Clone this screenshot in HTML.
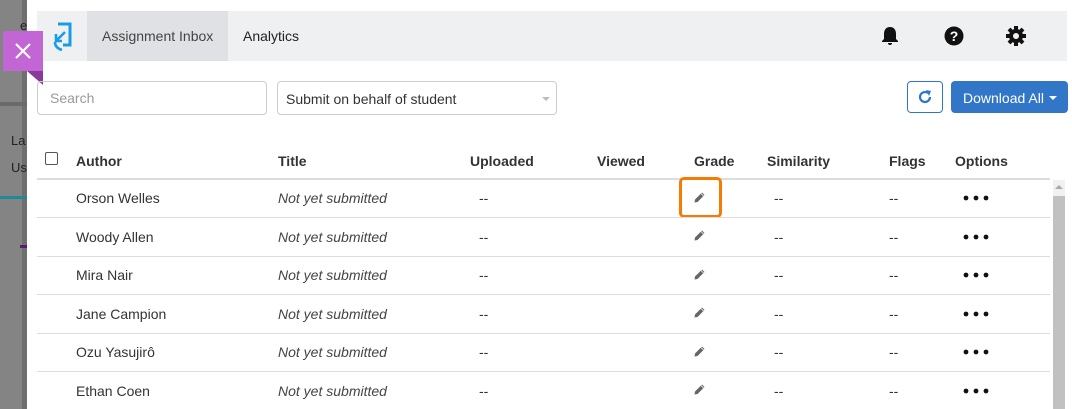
<!DOCTYPE html>
<html><head><style>
*{margin:0;padding:0;box-sizing:border-box}
body{width:1072px;height:409px;overflow:hidden;position:relative;font-family:"Liberation Sans",sans-serif;background:#808080}
.abs{position:absolute}
.modal{left:27px;top:0;width:1045px;height:409px;background:#fff}
.hdr{left:37px;top:11px;width:1030px;height:50px;background:#eef0f2}
.t{position:absolute;font-size:14px;color:#333;white-space:nowrap}
.th{font-weight:bold;color:#333}
.line{position:absolute;left:37px;width:1013px;height:1px;background:#ddd}
.it{font-style:italic;color:#444}
.dots{position:absolute;left:963px;width:26px;height:6px}
.pen{position:absolute;left:693px;width:13px;height:13px}
</style></head><body>
<div class="abs" style="left:0;top:0;width:22px;height:409px;background:#848484"></div>
<div class="abs" style="left:22px;top:0;width:5px;height:409px;background:#6f6f6f"></div>
<div class="abs" style="left:0;top:102px;width:27px;height:4px;background:#6a6a6a"></div>
<div class="abs" style="left:0;top:196px;width:27px;height:3px;background:#1f8a96"></div>
<div class="abs" style="left:20px;top:245px;width:7px;height:3px;background:#5a1c6e"></div>
<div class="t" style="left:11px;top:133px;color:#222;font-size:13px">La</div>
<div class="t" style="left:11px;top:160px;color:#222;font-size:13px">Us</div>
<div class="t" style="left:20px;top:18px;color:#222;font-size:13px">e</div>
<div class="abs modal"></div>
<div class="abs hdr"></div>
<div class="abs" style="left:87px;top:11px;width:141px;height:50px;background:#dfe1e4"></div>
<svg class="abs" style="left:50px;top:21px" width="24" height="30" viewBox="0 0 24 30"><path d="M8 3H20V24H13" fill="none" stroke="#1a9be6" stroke-width="3"/><path d="M15 11L7 19M6 13V20H12" fill="none" stroke="#1a9be6" stroke-width="2.6"/><path d="M5 21Q5 27 12 29" fill="none" stroke="#1a9be6" stroke-width="2.6"/></svg>
<div class="t" style="left:102px;top:28px;color:#444">Assignment Inbox</div>
<div class="t" style="left:243px;top:28px;color:#222">Analytics</div>
<svg class="abs" style="left:880px;top:26px" width="20" height="20" viewBox="0 0 20 20"><path d="M10 1C6 1 4 4 4 8V13L2 15V16H18V15L16 13V8C16 4 14 1 10 1Z M8 17H12A2 2 0 0 1 8 17Z" fill="#111"/></svg>
<svg class="abs" style="left:944px;top:26px" width="20" height="20" viewBox="0 0 20 20"><circle cx="10" cy="10" r="9.5" fill="#111"/><text x="10" y="15" font-size="14" font-weight="bold" text-anchor="middle" fill="#fff" font-family="Liberation Sans">?</text></svg>
<svg class="abs" style="left:1005px;top:25px" width="22" height="22" viewBox="0 0 22 22"><g fill="#111"><circle cx="11" cy="11" r="7"/><g stroke="#111" stroke-width="4"><line x1="11" y1="1" x2="11" y2="21"/><line x1="1" y1="11" x2="21" y2="11"/><line x1="4" y1="4" x2="18" y2="18"/><line x1="18" y1="4" x2="4" y2="18"/></g></g><circle cx="11" cy="11" r="3" fill="#eef0f2"/></svg>
<div class="abs" style="left:3px;top:31px;width:40px;height:40px;background:#c266d6"></div>
<div class="abs" style="left:27px;top:71px;width:0;height:0;border-top:14px solid #8a3a9a;border-left:16px solid transparent"></div>
<svg class="abs" style="left:14px;top:42px" width="18" height="18" viewBox="0 0 18 18"><path d="M2 2L16 16M16 2L2 16" stroke="#fff" stroke-width="2.2"/></svg>
<div class="abs" style="left:37px;top:81px;width:230px;height:34px;border:1px solid #ccc;border-radius:4px"></div>
<div class="t" style="left:50px;top:90px;color:#999">Search</div>
<div class="abs" style="left:277px;top:81px;width:280px;height:34px;border:1px solid #ccc;border-radius:4px"></div>
<div class="t" style="left:286px;top:91px">Submit on behalf of student</div>
<div class="abs" style="left:542px;top:97px;border-top:4px solid #bbb;border-left:4px solid transparent;border-right:4px solid transparent"></div>
<div class="abs" style="left:907px;top:81px;width:36px;height:32px;border:1px solid #2e77c8;border-radius:4px"></div>
<svg class="abs" style="left:917px;top:89px" width="16" height="16" viewBox="0 0 16 16"><path d="M13 8A5 5 0 1 1 11 4" fill="none" stroke="#2e77c8" stroke-width="2.2"/><path d="M9 1L14 2L12 7Z" fill="#2e77c8"/></svg>
<div class="abs" style="left:951px;top:81px;width:117px;height:32px;background:#3276c8;border-radius:4px"></div>
<div class="t" style="left:963px;top:90px;color:#fff">Download All</div>
<div class="abs" style="left:1049px;top:96px;border-top:4px solid #fff;border-left:4px solid transparent;border-right:4px solid transparent"></div>
<div class="abs" style="left:45px;top:152px;width:13px;height:13px;border:1px solid #555;border-radius:2px"></div>
<div class="t th" style="left:76px;top:153px">Author</div>
<div class="t th" style="left:278px;top:153px">Title</div>
<div class="t th" style="left:470px;top:153px">Uploaded</div>
<div class="t th" style="left:597px;top:153px">Viewed</div>
<div class="t th" style="left:694px;top:153px">Grade</div>
<div class="t th" style="left:767px;top:153px">Similarity</div>
<div class="t th" style="left:889px;top:153px">Flags</div>
<div class="t th" style="left:955px;top:153px">Options</div>
<div class="line" style="top:178px;height:2px"></div>
<div class="abs" style="left:1053px;top:180px;width:12px;height:229px;background:#f1f1f1"></div>
<div class="abs" style="left:1053px;top:196px;width:12px;height:213px;background:#c1c1c1"></div>
<div class="abs" style="left:1055px;top:185px;border-bottom:4px solid #aaa;border-left:4px solid transparent;border-right:4px solid transparent"></div>
<div class="abs" style="left:679px;top:177px;width:43px;height:41px;border:3px solid #f57c00;border-radius:5px"></div>

<svg width="0" height="0" style="position:absolute"><defs>
<symbol id="d" viewBox="0 0 26 6"><circle cx="3" cy="3" r="2.4" fill="#111"/><circle cx="13" cy="3" r="2.4" fill="#111"/><circle cx="23" cy="3" r="2.4" fill="#111"/></symbol>
<symbol id="p" viewBox="0 0 13 13"><path d="M9 1.5L11.5 4L4.5 11L1.5 11.5L2 8.5Z" fill="#666"/><path d="M8 2.5L10.5 5" stroke="#fff" stroke-width="0.8"/></symbol>
</defs></svg>

<div class="t" style="left:76px;top:190px">Orson Welles</div><div class="t it" style="left:278px;top:190px">Not yet submitted</div><div class="t" style="left:479px;top:190px">--</div><div class="t" style="left:774px;top:190px">--</div><div class="t" style="left:889px;top:190px">--</div><svg class="dots" style="top:195px"><use href="#d"/></svg><svg class="pen" style="top:191px"><use href="#p"/></svg>
<div class="line" style="top:217px"></div>
<div class="t" style="left:76px;top:229px">Woody Allen</div><div class="t it" style="left:278px;top:229px">Not yet submitted</div><div class="t" style="left:479px;top:229px">--</div><div class="t" style="left:774px;top:229px">--</div><div class="t" style="left:889px;top:229px">--</div><svg class="dots" style="top:234px"><use href="#d"/></svg><svg class="pen" style="top:229px"><use href="#p"/></svg>
<div class="line" style="top:256px"></div>
<div class="t" style="left:76px;top:267px">Mira Nair</div><div class="t it" style="left:278px;top:267px">Not yet submitted</div><div class="t" style="left:479px;top:267px">--</div><div class="t" style="left:774px;top:267px">--</div><div class="t" style="left:889px;top:267px">--</div><svg class="dots" style="top:272px"><use href="#d"/></svg><svg class="pen" style="top:268px"><use href="#p"/></svg>
<div class="line" style="top:294px"></div>
<div class="t" style="left:76px;top:306px">Jane Campion</div><div class="t it" style="left:278px;top:306px">Not yet submitted</div><div class="t" style="left:479px;top:306px">--</div><div class="t" style="left:774px;top:306px">--</div><div class="t" style="left:889px;top:306px">--</div><svg class="dots" style="top:311px"><use href="#d"/></svg><svg class="pen" style="top:306px"><use href="#p"/></svg>
<div class="line" style="top:333px"></div>
<div class="t" style="left:76px;top:344px">Ozu Yasujirô</div><div class="t it" style="left:278px;top:344px">Not yet submitted</div><div class="t" style="left:479px;top:344px">--</div><div class="t" style="left:774px;top:344px">--</div><div class="t" style="left:889px;top:344px">--</div><svg class="dots" style="top:349px"><use href="#d"/></svg><svg class="pen" style="top:345px"><use href="#p"/></svg>
<div class="line" style="top:371px"></div>
<div class="t" style="left:76px;top:383px">Ethan Coen</div><div class="t it" style="left:278px;top:383px">Not yet submitted</div><div class="t" style="left:479px;top:383px">--</div><div class="t" style="left:774px;top:383px">--</div><div class="t" style="left:889px;top:383px">--</div><svg class="dots" style="top:388px"><use href="#d"/></svg><svg class="pen" style="top:383px"><use href="#p"/></svg>
</body></html>
